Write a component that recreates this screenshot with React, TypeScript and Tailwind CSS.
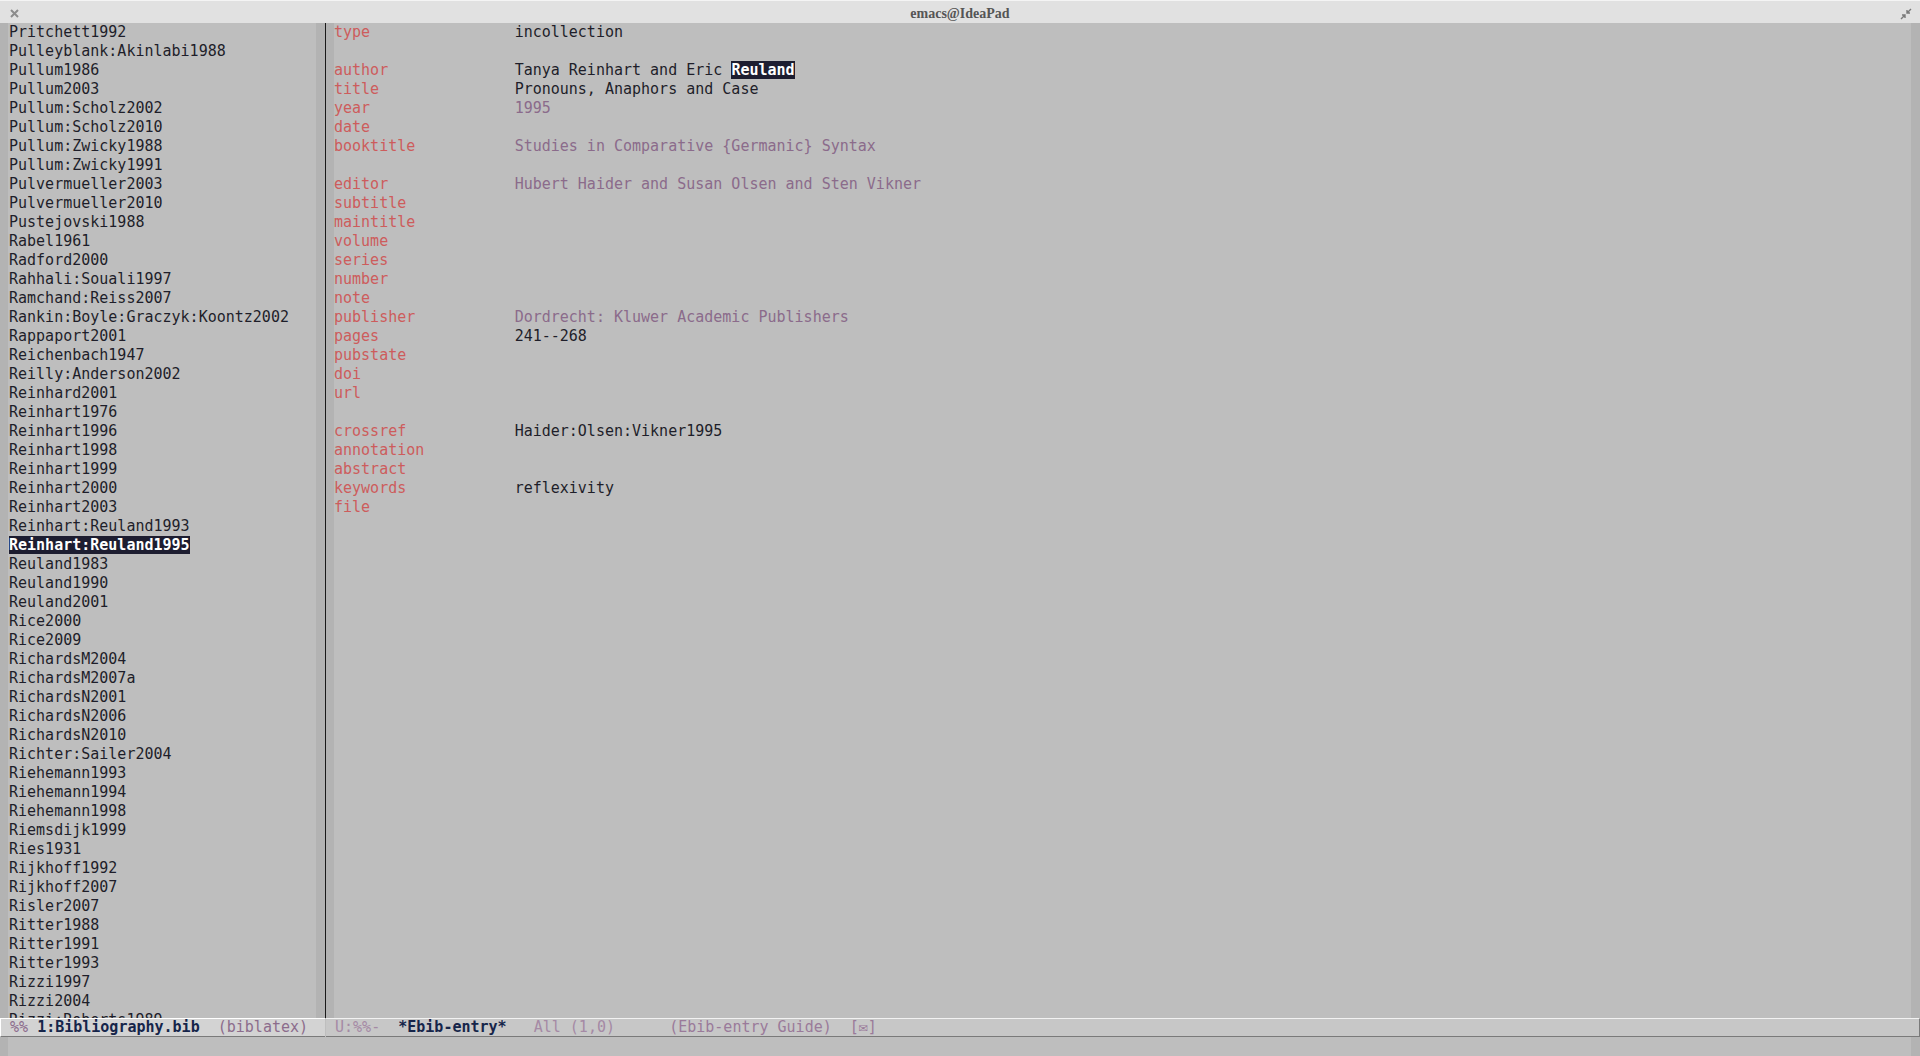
import React from 'react';

const keys = [
  'Pritchett1992',
  'Pulleyblank:Akinlabi1988',
  'Pullum1986',
  'Pullum2003',
  'Pullum:Scholz2002',
  'Pullum:Scholz2010',
  'Pullum:Zwicky1988',
  'Pullum:Zwicky1991',
  'Pulvermueller2003',
  'Pulvermueller2010',
  'Pustejovski1988',
  'Rabel1961',
  'Radford2000',
  'Rahhali:Souali1997',
  'Ramchand:Reiss2007',
  'Rankin:Boyle:Graczyk:Koontz2002',
  'Rappaport2001',
  'Reichenbach1947',
  'Reilly:Anderson2002',
  'Reinhard2001',
  'Reinhart1976',
  'Reinhart1996',
  'Reinhart1998',
  'Reinhart1999',
  'Reinhart2000',
  'Reinhart2003',
  'Reinhart:Reuland1993',
  'Reinhart:Reuland1995',
  'Reuland1983',
  'Reuland1990',
  'Reuland2001',
  'Rice2000',
  'Rice2009',
  'RichardsM2004',
  'RichardsM2007a',
  'RichardsN2001',
  'RichardsN2006',
  'RichardsN2010',
  'Richter:Sailer2004',
  'Riehemann1993',
  'Riehemann1994',
  'Riehemann1998',
  'Riemsdijk1999',
  'Ries1931',
  'Rijkhoff1992',
  'Rijkhoff2007',
  'Risler2007',
  'Ritter1988',
  'Ritter1991',
  'Ritter1993',
  'Rizzi1997',
  'Rizzi2004',
  'Rizzi:Roberts1989',
];

type Field = { label?: string; value?: string; tone?: 'plain' | 'string' };

// null = blank separator line
const fields: (Field | null)[] = [
  { label: 'type', value: 'incollection', tone: 'plain' },
  null,
  { label: 'author', value: 'Tanya Reinhart and Eric ', tone: 'plain' },
  { label: 'title', value: 'Pronouns, Anaphors and Case', tone: 'plain' },
  { label: 'year', value: '1995', tone: 'string' },
  { label: 'date' },
  { label: 'booktitle', value: 'Studies in Comparative {Germanic} Syntax', tone: 'string' },
  null,
  { label: 'editor', value: 'Hubert Haider and Susan Olsen and Sten Vikner', tone: 'string' },
  { label: 'subtitle' },
  { label: 'maintitle' },
  { label: 'volume' },
  { label: 'series' },
  { label: 'number' },
  { label: 'note' },
  { label: 'publisher', value: 'Dordrecht: Kluwer Academic Publishers', tone: 'string' },
  { label: 'pages', value: '241--268', tone: 'plain' },
  { label: 'pubstate' },
  { label: 'doi' },
  { label: 'url' },
  null,
  { label: 'crossref', value: 'Haider:Olsen:Vikner1995', tone: 'plain' },
  { label: 'annotation' },
  { label: 'abstract' },
  { label: 'keywords', value: 'reflexivity', tone: 'plain' },
  { label: 'file' },
];

const mono = { fontFamily: '"DejaVu Sans Mono", "Liberation Mono", monospace' };

export default function App() {
  return (
    <div
      className="w-[1920px] h-[1056px] flex flex-col bg-[#bebebe] overflow-hidden text-[15px] leading-[19px] text-[#1e1e2a]"
      style={mono}
    >
      {/* Title bar */}
      <div className="h-[23px] shrink-0 bg-[#e1e1e1] border-t border-[#f4f4f4] flex items-center justify-between pl-[9px] pr-[8px] pt-[3px]">
        <svg width="11" height="11" viewBox="0 0 11 11" className="text-[#8c8c8c]">
          <path d="M2 2 L9 9 M9 2 L2 9" stroke="currentColor" strokeWidth="2" fill="none" />
        </svg>
        <span
          className="text-[14px] font-bold text-[#555555] leading-none"
          style={{ fontFamily: '"Liberation Serif", serif' }}
        >
          emacs@IdeaPad
        </span>
        <svg width="12" height="12" viewBox="0 0 12 12" className="text-[#7a7a7a]">
          <path d="M11 1 L7 5 M7 2 L7 5 L10 5" stroke="currentColor" strokeWidth="1.4" fill="none" />
          <path d="M1 11 L5 7 M2 7 L5 7 L5 10" stroke="currentColor" strokeWidth="1.4" fill="none" />
        </svg>
      </div>

      {/* Windows */}
      <div className="flex flex-1 min-h-0">
        {/* Left window: bibliography index */}
        <div className="w-[325px] shrink-0 flex flex-col">
          <div className="flex flex-1 min-h-0 overflow-hidden">
            <div className="w-[8px] shrink-0 bg-[#b3b3b3]" />
            <div className="flex-1 min-w-0 pl-px whitespace-pre overflow-hidden">
              {keys.map((k) =>
                k === 'Reinhart:Reuland1995' ? (
                  <div key={k}>
                    <span className="bg-[#1d1d30] text-white font-bold">{k}</span>
                  </div>
                ) : (
                  <div key={k}>{k}</div>
                )
              )}
            </div>
            <div className="w-[9px] shrink-0 bg-[#b3b3b3]" />
          </div>
          <div className="h-[19px] shrink-0 bg-[#d3d3d3] border-t border-l border-white border-b border-b-[#7a7a7a] flex items-center whitespace-pre">
            <span className="text-[#8c6c8c]"> %% </span>
            <span className="font-bold text-[#16254a]">1:Bibliography.bib</span>
            <span className="text-[#8c6c8c]">  (biblatex)</span>
          </div>
        </div>

        <div className="w-px shrink-0 bg-[#1a1a1a] mb-[19px]" />

        {/* Right window: entry */}
        <div className="flex-1 min-w-0 flex flex-col">
          <div className="flex flex-1 min-h-0 overflow-hidden">
            <div className="w-[8px] shrink-0 bg-[#b3b3b3]" />
            <div className="flex-1 min-w-0 whitespace-pre overflow-hidden">
              {fields.map((f, i) =>
                f === null ? (
                  <div key={i} className="h-[19px]" />
                ) : (
                  <div key={i}>
                    <span className="text-[#cd5c5c]">{f.label!.padEnd(20)}</span>
                    {f.value && (
                      <span className={f.tone === 'string' ? 'text-[#8b6b8b]' : ''}>{f.value}</span>
                    )}
                    {f.label === 'author' && (
                      <span className="bg-[#1d1d30] text-white font-bold">Reuland</span>
                    )}
                  </div>
                )
              )}
            </div>
            <div className="w-[9px] shrink-0 bg-[#b3b3b3]" />
          </div>
          <div className="h-[19px] shrink-0 bg-[#c7c7c7] border-t border-[#f2f2f2] border-b border-b-[#7a7a7a] border-r border-r-[#7a7a7a] flex items-center whitespace-pre">
            <span className="text-[#a58aa5]"> U:%%-  </span>
            <span className="font-bold text-[#16254a]">*Ebib-entry*</span>
            <span className="text-[#a58aa5]">   All (1,0)      </span>
            <span className="text-[#9a7a9a]">(Ebib-entry Guide)  [✉]</span>
          </div>
        </div>
      </div>

      {/* Echo area */}
      <div className="h-[19px] shrink-0 flex">
        <div className="w-[8px] bg-[#b3b3b3]" />
        <div className="flex-1" />
        <div className="w-[9px] bg-[#b3b3b3]" />
      </div>
    </div>
  );
}
